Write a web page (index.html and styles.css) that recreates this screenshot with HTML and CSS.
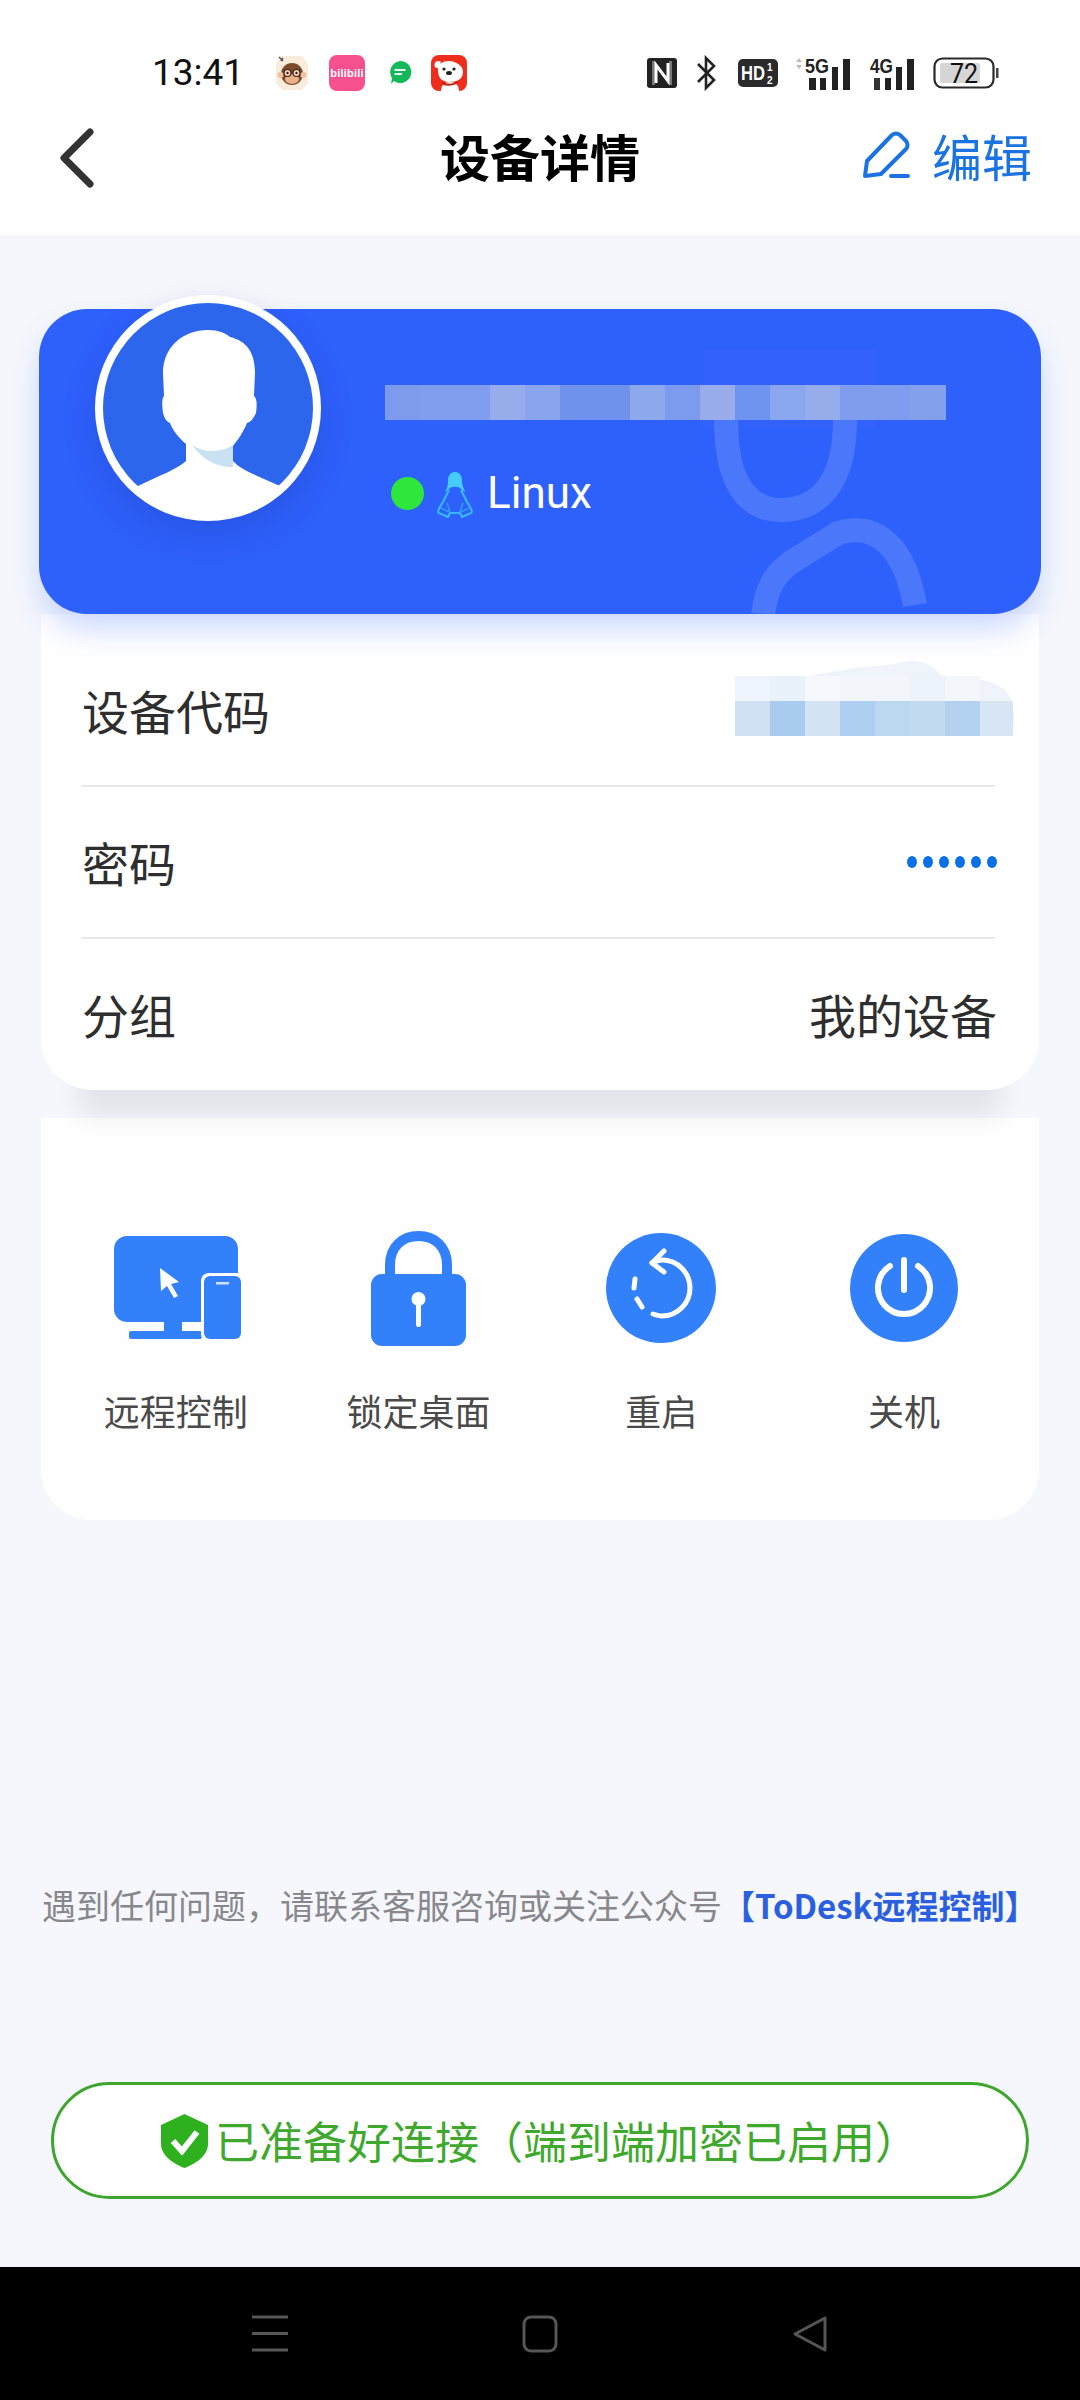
FILE: index.html
```html
<!DOCTYPE html>
<html lang="zh-CN">
<head>
<meta charset="utf-8">
<title>设备详情</title>
<link rel="stylesheet" href="styles.css">
</head>
<body>
<div class="page">
  <header class="top">
    <div class="status">
      <span class="time">13:41</span>
      <div class="apps">
        <svg class="app" width="36" height="36" viewBox="0 0 36 36">
          <path d="M8 1H28L34 9V28L28 35H8L2 28V9Z" fill="#f9ecdc"/>
          <path d="M5 2L9 6M9 3L7 6" stroke="#555" stroke-width="1.5" fill="none"/>
          <circle cx="18" cy="19" r="11" fill="#7d4a2c"/>
          <circle cx="6.500" cy="20" r="3" fill="#f2c3a4"/>
          <circle cx="29.500" cy="20" r="3" fill="#f2c3a4"/>
          <ellipse cx="18" cy="24" rx="7" ry="5" fill="#e9b08c"/>
          <circle cx="13.500" cy="18" r="3.500" fill="#f3d6bd" stroke="#3d2415" stroke-width="1.200"/>
          <circle cx="22.500" cy="18" r="3.500" fill="#f3d6bd" stroke="#3d2415" stroke-width="1.200"/>
          <circle cx="13.500" cy="18" r="1.200" fill="#3d2415"/>
          <circle cx="22.500" cy="18" r="1.200" fill="#3d2415"/>
        </svg>
        <div class="bili"><span class="bili-text">bilibili</span></div>
        <svg class="app-chat" width="24" height="26" viewBox="0 0 24 26">
          <path d="M12 1a11 11 0 1 1-6 20L3 24l1-6A11 11 0 0 1 12 1Z" fill="#13b85a"/>
          <path d="M6.500 10H17.500M6.500 14H14" stroke="#eafff2" stroke-width="1.800"/>
        </svg>
        <svg class="app" width="36" height="36" viewBox="0 0 36 36">
          <rect width="36" height="36" rx="8" fill="#ee2d1c"/>
          <path d="M7 15C7 9 12 6 18 6S32 10 32 17 26 27 18 27 7 22 7 15Z" fill="#fff"/>
          <path d="M4 12C2 8 6 4 10 7L8 14Z" fill="#fff"/>
          <path d="M10 36C10 30 14 27 19 27S28 30 28 36Z" fill="#fff"/>
          <path d="M11 28Q19 32 27 27" stroke="#c81e12" stroke-width="2" fill="none"/>
          <circle cx="13" cy="14" r="1.600" fill="#222"/>
          <circle cx="23" cy="14" r="1.600" fill="#222"/>
          <ellipse cx="18" cy="18" rx="3" ry="2" fill="#222"/>
        </svg>
      </div>
      <div class="sys">
        <svg class="nfc" width="30" height="30" viewBox="0 0 30 30">
          <rect width="30" height="30" rx="3" fill="#222"/>
          <path d="M5 3H8V27H5ZM22 3H25V27H22Z" fill="#777"/>
          <path d="M9 25V7L21 23V5" stroke="#fff" stroke-width="3" fill="none"/>
        </svg>
        <svg class="bt" width="20" height="36" viewBox="0 0 20 36">
          <path d="M2 9L18 25L10 33V3L18 11L2 27" stroke="#222" stroke-width="2.600" fill="none"/>
        </svg>
        <svg class="hd" width="40" height="28" viewBox="0 0 40 28">
          <rect width="40" height="28" rx="5" fill="#2a2a2a"/>
          <text class="svg-b" x="3" y="21" font-size="20" textLength="24" lengthAdjust="spacingAndGlyphs">HD</text>
          <text class="svg-b" x="29" y="12" font-size="10">1</text>
          <text class="svg-b" x="29" y="25" font-size="10">2</text>
        </svg>
        <svg class="sig" width="60" height="33" viewBox="0 0 60 33">
          <path d="M3 5L6 1L9 5ZM3 8H9L6 12Z" fill="#bdbdbd"/>
          <text class="svg-b" x="12" y="16" font-size="21" textLength="24" lengthAdjust="spacingAndGlyphs">5G</text>
          <rect x="16" y="21" width="7" height="12" fill="#222"/>
          <rect x="27" y="21" width="6" height="12" fill="#222"/>
          <rect x="39" y="10" width="6" height="23" fill="#222"/>
          <rect x="50" y="2" width="7" height="31" fill="#222"/>
        </svg>
        <svg class="sig4" width="46" height="33" viewBox="0 0 46 33">
          <text class="svg-b" x="0" y="16" font-size="21" textLength="23" lengthAdjust="spacingAndGlyphs">4G</text>
          <rect x="4" y="21" width="6" height="12" fill="#333"/>
          <rect x="15" y="21" width="6" height="12" fill="#222"/>
          <rect x="26" y="10" width="6" height="23" fill="#222"/>
          <rect x="37" y="2" width="7" height="31" fill="#222"/>
        </svg>
        <svg class="bat" width="66" height="32" viewBox="0 0 66 32">
          <rect x="1.500" y="1.500" width="59" height="29" rx="8" fill="none" stroke="#2a2a2a" stroke-width="2.200"/>
          <rect x="7" y="6" width="40" height="20" rx="2" fill="#d6d6d6"/>
          <rect x="63" y="11" width="2.500" height="10" fill="#444"/>
          <text class="svg-n" x="17" y="26" font-size="28" textLength="28" lengthAdjust="spacingAndGlyphs">72</text>
        </svg>
      </div>
    </div>
    <nav class="bar">
      <svg class="back" width="36" height="60" viewBox="0 0 36 60">
        <path d="M31 4L5 30L31 56" stroke="#333" stroke-width="7" fill="none" stroke-linecap="round" stroke-linejoin="round"/>
      </svg>
      <h1 class="title">设备详情</h1>
      <div class="edit">
        <svg width="50" height="50" viewBox="0 0 50 50">
          <path d="M4 46L6 31L31 5Q35 2 39 5L45 11Q48 15 45 19L20 44Z" stroke="#1a73e0" stroke-width="4" fill="none" stroke-linejoin="round"/>
          <path d="M30 46H47" stroke="#1a73e0" stroke-width="4" stroke-linecap="round"/>
        </svg>
        <span class="edit-text">编辑</span>
      </div>
    </nav>
  </header>

  <main class="main">
    <section class="hero">
      <svg class="wm" width="300" height="305" viewBox="0 0 300 305">
        <rect x="-3" y="41" width="176" height="77" fill="#3a68fb" opacity=".3"/>
        <path d="M23 111C23 175 45 201 78 201C115 201 142 175 142 111" stroke="#4b78fb" stroke-width="24" fill="none"/>
        <path d="M60 305C64 275 75 262 90 252L135 224C175 212 202 240 212 296" stroke="#4b78fb" stroke-width="24" fill="none"/>
      </svg>
      <div class="avatar">
        <svg width="226" height="226" viewBox="0 0 226 226">
          <defs><clipPath id="av"><circle cx="113" cy="113" r="106"/></clipPath></defs>
          <circle cx="113" cy="113" r="113" fill="#fff"/>
          <circle cx="113" cy="113" r="105" fill="#2c66ec"/>
          <g clip-path="url(#av)">
            <path d="M113 35C124 35 130 38 135 42C152 46 160 58 160 78L159 101Q163 104 161 118Q157 127 152 128C146 142 140 148 138 151V166C145 174 160 180 185 191L200 226H26L43 191C66 180 82 174 91 166V149C84 143 78 136 75 128Q70 126 68 118Q66 104 69 101L68 78C68 52 88 35 113 35Z" fill="#fff"/>
            <path d="M97 150C108 158 126 158 138 150V172C128 172 112 170 97 150Z" fill="#c8e2f3"/>
          </g>
        </svg>
      </div>
      <div class="info">
        <div class="blur-name"></div>
        <div class="os">
          <span class="dot"></span>
          <svg class="tux" width="40" height="50" viewBox="0 0 40 50">
            <path d="M14 20L8 32C4 38 2 42 4 43L13 47L15 43H25L27 47L36 43C38 42 36 38 32 32L26 20" fill="none" stroke="#36b8fa" stroke-width="2.200" stroke-linejoin="round"/>
            <path d="M20 2C25 2 27 6 27 11C27 16 29 18 30 22L26 19C24 16 16 16 14 19L10 22C12 18 13 16 13 11C13 6 15 2 20 2Z" fill="#46cbff"/>
            <path d="M14 42L6 38M26 42L34 38M12 33L15 42M28 33L25 42" stroke="#2f9df2" stroke-width="1.600" fill="none"/>
          </svg>
          <span class="os-name">Linux</span>
        </div>
      </div>
    </section>

    <section class="details">
      <div class="row row-first">
        <span class="k">设备代码</span>
        <svg class="blur-code" width="280" height="82" viewBox="0 0 280 82">
          <path d="M72 22L120 14L160 10Q185 2 200 15L210 25H240Q279 28 279 61V70H72Z" fill="#eff4fb"/>
          <rect x="0" y="22" width="35" height="25" fill="#eef4fb"/>
          <rect x="35" y="22" width="35" height="25" fill="#e9f1fa"/>
          <rect x="70" y="22" width="35" height="25" fill="#f5f8fc"/>
          <rect x="105" y="22" width="70" height="25" fill="#f2f6fb"/>
          <rect x="175" y="22" width="35" height="25" fill="#ecf3fa"/>
          <rect x="210" y="22" width="35" height="25" fill="#f3f7fc"/>
          <rect x="0" y="47" width="35" height="35" fill="#cfe1f3"/>
          <rect x="35" y="47" width="35" height="35" fill="#a9cbee"/>
          <rect x="70" y="47" width="35" height="35" fill="#d3e3f3"/>
          <rect x="105" y="47" width="35" height="35" fill="#aecff0"/>
          <rect x="140" y="47" width="35" height="35" fill="#bcd8ef"/>
          <rect x="175" y="47" width="35" height="35" fill="#c2dbf1"/>
          <rect x="210" y="47" width="35" height="35" fill="#b2d2ef"/>
          <rect x="245" y="47" width="33" height="35" fill="#d8e6f4"/>
        </svg>
      </div>
      <div class="row">
        <span class="k">密码</span>
        <span class="dots"><i></i><i></i><i></i><i></i><i></i><i></i></span>
      </div>
      <div class="row row-last">
        <span class="k">分组</span>
        <span class="k k-right">我的设备</span>
      </div>
    </section>

    <section class="actions">
      <div class="act">
        <div class="act-icon act-icon-monitor">
          <svg width="130" height="104" viewBox="0 0 130 104">
            <rect x="0" y="0" width="124" height="86" rx="13" fill="#3380fb"/>
            <rect x="50" y="86" width="18" height="12" fill="#3380fb"/>
            <rect x="15" y="95" width="73" height="8" rx="2" fill="#3380fb"/>
            <rect x="87" y="37" width="43" height="69" rx="8" fill="#fff"/>
            <rect x="90" y="40" width="37" height="63" rx="6" fill="#3380fb"/>
            <rect x="102" y="46" width="13" height="2.500" fill="#cfe0ff"/>
            <path d="M46 32L65 46L57 48L64 60L60 62L53 50L47 55Z" fill="#fff"/>
          </svg>
        </div>
        <span class="act-label">远程控制</span>
      </div>
      <div class="act">
        <div class="act-icon">
          <svg width="95" height="115" viewBox="0 0 95 115">
            <path d="M19 48V34C19 16 31 5 47.500 5S76 16 76 34V48" stroke="#3380fb" stroke-width="10" fill="none"/>
            <rect x="0" y="43" width="95" height="72" rx="11" fill="#3380fb"/>
            <circle cx="47.500" cy="68" r="7" fill="#fff"/>
            <rect x="45" y="68" width="5" height="28" rx="2.500" fill="#fff"/>
          </svg>
        </div>
        <span class="act-label">锁定桌面</span>
      </div>
      <div class="act">
        <div class="act-icon">
          <svg width="110" height="110" viewBox="0 0 110 110">
            <circle cx="55" cy="55" r="55" fill="#3380fb"/>
            <path d="M46 30C50 28 52 27 56 27A28 28 0 0 1 56 83C53 83 50 82 47 81" stroke="#fff" stroke-width="5" fill="none" stroke-linecap="round"/>
            <path d="M58 18L46 30L58 39" stroke="#fff" stroke-width="5" fill="none" stroke-linecap="round" stroke-linejoin="round"/>
            <path d="M29 46L28 55M31 66L36 74" stroke="#fff" stroke-width="5" fill="none" stroke-linecap="round"/>
          </svg>
        </div>
        <span class="act-label">重启</span>
      </div>
      <div class="act">
        <div class="act-icon">
          <svg width="108" height="108" viewBox="0 0 108 108">
            <circle cx="54" cy="54" r="54" fill="#3380fb"/>
            <path d="M40 32A26 26 0 1 0 68 32" stroke="#fff" stroke-width="6" fill="none" stroke-linecap="round"/>
            <path d="M54 26V56" stroke="#fff" stroke-width="6" stroke-linecap="round"/>
          </svg>
        </div>
        <span class="act-label">关机</span>
      </div>
    </section>

    <p class="help">遇到任何问题，请联系客服咨询或关注公众号<b class="help-link">【ToDesk远程控制】</b></p>

    <div class="pill">
      <svg width="47" height="54" viewBox="0 0 47 54">
        <path d="M23.500 0L47 11V30C47 42 34 50 23.500 54C13 50 0 42 0 30V11Z" fill="#2fb01f"/>
        <path d="M12 27L21 37L36 18" stroke="#fff" stroke-width="6" fill="none"/>
      </svg>
      <span class="pill-text">已准备好连接（端到端加密已启用）</span>
    </div>
  </main>

  <footer class="navkeys">
    <svg width="36" height="38" viewBox="0 0 36 38">
      <path d="M0 2H36M0 18.500H36M0 35H36" stroke="#565656" stroke-width="3"/>
    </svg>
    <svg width="36" height="38" viewBox="0 0 36 38">
      <rect x="2" y="2" width="32" height="34" rx="7" fill="none" stroke="#565656" stroke-width="3"/>
    </svg>
    <svg width="36" height="38" viewBox="0 0 36 38">
      <path d="M33 3V35L3 19Z" fill="none" stroke="#565656" stroke-width="3" stroke-linejoin="round"/>
    </svg>
  </footer>
</div>
</body>
</html>
```
FILE: styles.css
```css
* { box-sizing: border-box; }
html, body { margin: 0; padding: 0; }
body {
  width: 1080px;
  height: 2400px;
  overflow: hidden;
  background: #f5f7fc;
  font-family: "Noto Sans CJK SC", "Noto Sans", sans-serif;
}
svg { display: block; flex: none; }
.page { width: 1080px; height: 2400px; display: flex; flex-direction: column; }

/* top area */
.top { height: 235px; background: #fff; flex: none; }
.status {
  height: 100px;
  padding: 46px 0 0 152px;
  display: flex;
  align-items: center;
}
.time {
  font-family: Roboto, sans-serif;
  font-size: 37px;
  line-height: 54px;
  color: #111;
  width: 91px;
}
.apps { display: flex; align-items: center; margin-left: 31px; }
.bili {
  width: 36px;
  height: 36px;
  margin-left: 19px;
  border-radius: 8px;
  background: #f7508f;
  display: flex;
  align-items: center;
  justify-content: center;
  overflow: hidden;
}
.bili-text {
  font-family: "Liberation Sans", sans-serif;
  font-weight: 700;
  font-size: 11px;
  line-height: 12px;
  color: #fff;
  letter-spacing: .2px;
}
.app-chat { margin: 0 19px 0 23px; }
.sys { display: flex; align-items: center; margin-left: 180px; }
.bt { margin-left: 19px; }
.hd { margin-left: 22px; overflow: visible; }
.sig { margin-left: 15px; overflow: visible; }
.sig4 { margin-left: 17px; overflow: visible; }
.bat { margin-left: 17px; overflow: visible; }
.svg-b { font-family: "Liberation Sans", sans-serif; font-weight: 700; fill: #fff; }
.sig .svg-b, .sig4 .svg-b { fill: #222; }
.svg-n { font-family: Roboto, sans-serif; fill: #111; }

.bar {
  height: 115px;
  padding: 0 48px 6px 48px;
  display: grid;
  grid-template-columns: 1fr auto 1fr;
  align-items: center;
}
.back { margin: 6px 0 0 11px; }
.title {
  margin: 0;
  font-size: 50px;
  line-height: 70px;
  font-weight: 700;
  color: #000;
}
.edit { display: flex; align-items: center; justify-content: flex-end; gap: 21px; }
.edit-text { font-size: 50px; line-height: 70px; color: #1a73e0; }

/* main */
.main { flex: 1; padding: 74px 39px 0; }
.hero {
  position: relative;
  z-index: 2;
  height: 305px;
  border-radius: 48px;
  background: #2e60fb;
  box-shadow: 0 18px 32px -4px rgba(46, 96, 251, .26);
}
.wm { position: absolute; right: 38px; top: 0; overflow: hidden; }
.avatar {
  position: absolute;
  left: 56px;
  top: -14px;
  width: 226px;
  height: 226px;
  border-radius: 50%;
  box-shadow: 0 14px 34px rgba(10, 30, 120, .16);
}
.info { position: relative; padding: 76px 0 0 346px; }
.blur-name {
  width: 561px;
  height: 35px;
  background: linear-gradient(90deg,
    #7e9aec 0 35px, #809def 35px 105px, #96aceb 105px 140px, #8aa4ee 140px 175px,
    #6f93ec 175px 245px, #8ea8ec 245px 280px, #7d9bee 280px 315px, #98adea 315px 350px,
    #6f94f0 350px 385px, #8aa6ef 385px 420px, #97adeb 420px 455px, #7f9cee 455px 525px,
    #85a0ea 525px 561px);
}
.os { display: flex; align-items: center; height: 50px; margin-top: 50px; padding-left: 6px; }
.dot { width: 33px; height: 33px; border-radius: 50%; background: #2ee63c; margin-top: -4px; }
.tux { margin-left: 11px; }
.os-name {
  margin-left: 12px;
  font-family: Roboto, sans-serif;
  font-size: 44px;
  line-height: 50px;
  color: #fff;
  margin-top: -4px;
}

.details {
  position: relative;
  z-index: 1;
  margin: 0 2px;
  padding: 21px 44px 0 40px;
  height: 476px;
  background: #fff;
  border-radius: 0 0 52px 52px;
  box-shadow: 0 64px 24px -36px rgba(0, 0, 0, .07);
}
.row {
  height: 152px;
  display: flex;
  align-items: center;
  justify-content: space-between;
  border-bottom: 2px solid #e9e9ea;
}
.row-last { border-bottom: 0; height: 150px; }
.row-first { position: relative; }
.k { font-size: 47px; line-height: 60px; color: #2e2e2e; margin-left: 1px; }
.k-right { margin-right: -2px; }
.blur-code { position: absolute; right: -20px; top: 19px; }
.dots { display: flex; gap: 6px; margin-top: -1px; margin-right: -2px; }
.dots i { display: block; width: 10px; height: 12px; border-radius: 50%; background: #0a70e6; }

.actions {
  margin: 28px 2px 0;
  height: 402px;
  padding: 112px 13.5px 0;
  display: grid;
  grid-template-columns: repeat(4, 1fr);
  align-items: start;
  background: #fefefe;
  border-radius: 0 0 50px 50px;
}
.act { display: flex; flex-direction: column; align-items: center; }
.act-icon { height: 116px; display: flex; align-items: center; justify-content: center; }
.act-icon-monitor { margin-left: 6px; }
.act-label { margin-top: 46px; font-size: 36px; line-height: 36px; color: #4a4a4a; white-space: nowrap; }

.help {
  margin: 365px 0 0 3px;
  font-size: 34px;
  line-height: 40px;
  color: #88888c;
  white-space: nowrap;
}
.help-link { color: #2a5fe0; font-weight: 700; font-size: 33px; }

.pill {
  margin: 157px 12px 0 12px;
  height: 117px;
  display: flex;
  align-items: center;
  justify-content: center;
  gap: 7px;
  border: 3px solid #3fa62d;
  border-radius: 59px;
  background: #fff;
}
.pill-text { font-size: 44px; line-height: 60px; color: #3fa92e; white-space: nowrap; margin-top: -2px; }

.navkeys {
  flex: none;
  height: 133px;
  padding-top: 48px;
  background: #000;
  display: flex;
  justify-content: center;
  align-items: flex-start;
  gap: 234px;
}
```
